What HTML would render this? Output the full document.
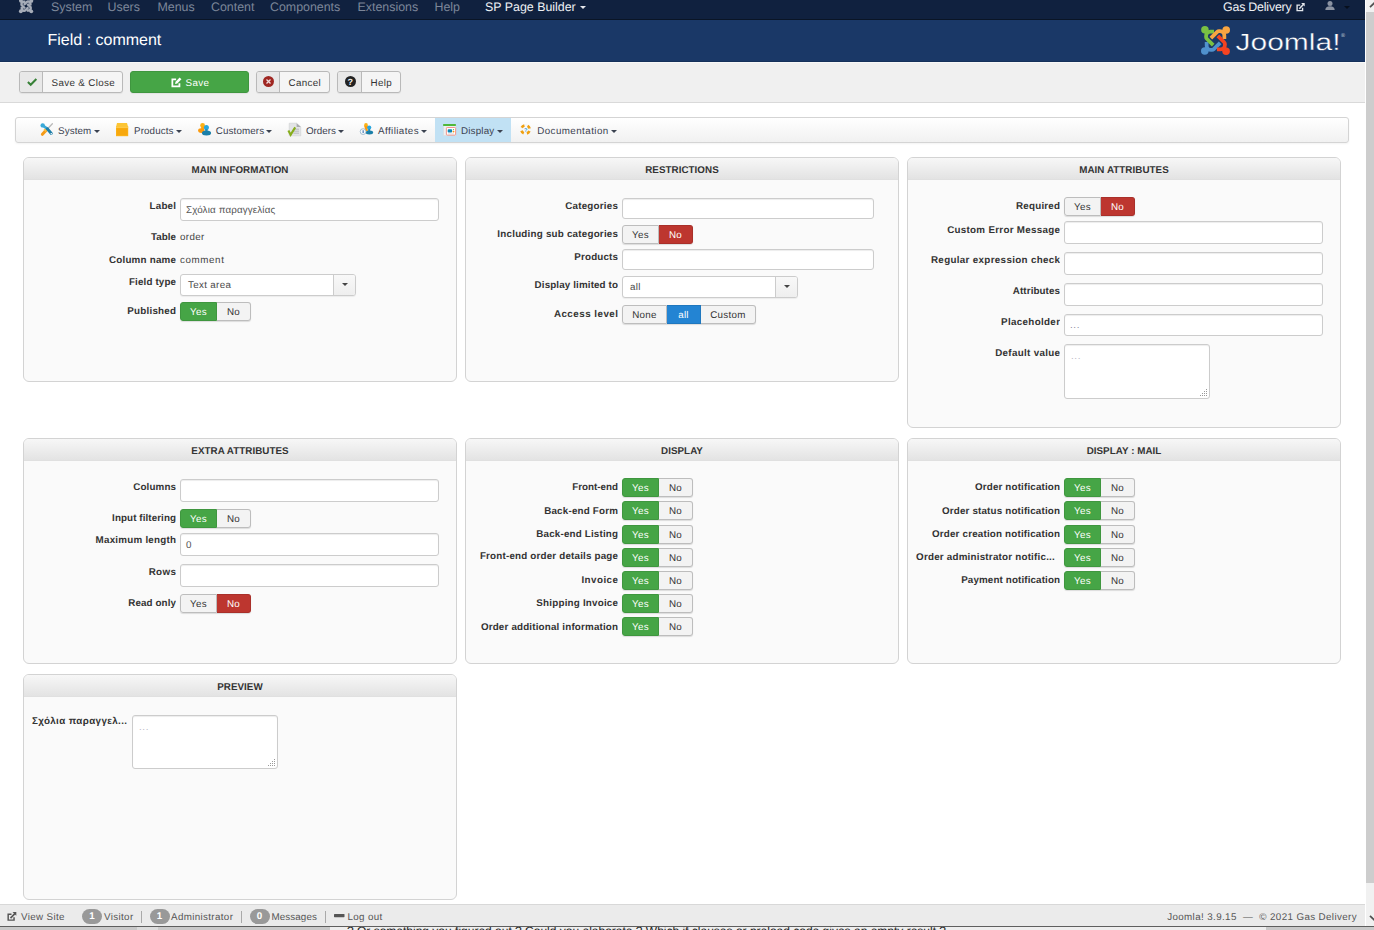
<!DOCTYPE html>
<html lang="en">
<head>
<meta charset="utf-8">
<title>Field : comment</title>
<style>
*{box-sizing:border-box;margin:0;padding:0}
html,body{width:1374px;height:930px;overflow:hidden;background:#fff}
body{position:relative;font-family:"Liberation Sans",Arial,sans-serif;font-size:9.8px;color:#333;line-height:1;text-rendering:geometricPrecision}
svg{position:absolute;overflow:visible}
/* ---------- top navbar ---------- */
#nav{position:absolute;left:0;top:0;width:1365px;height:20px;background:#10213f;border-bottom:1px solid #0a1526}
#nav span{position:absolute;top:0;font-size:12.4px;line-height:14px;color:#7c8699;white-space:nowrap}
#nav span.w{color:#eef0f4}
.car{position:absolute;width:0;height:0;border-left:3px solid transparent;border-right:3px solid transparent;border-top:3px solid #444}
/* ---------- header ---------- */
#hdr{position:absolute;left:0;top:20px;width:1365px;height:42px;background:#1a3867;border-bottom:1px solid #15305a}
#hdr h1{position:absolute;left:47.5px;top:11px;font-size:16px;line-height:20px;font-weight:normal;color:#fff;white-space:nowrap}
/* ---------- toolbar ---------- */
#tb{position:absolute;left:0;top:62px;width:1365px;height:41px;background:#f0f0f0;border-top:1px solid #f8f8f8;border-bottom:1px solid #d9d9d9}
.btn{position:absolute;top:8px;height:22px;border:1px solid #b9b9b9;border-radius:3px;background:#f5f5f5;font-size:9.8px;letter-spacing:.35px;line-height:20px;color:#333;white-space:nowrap;box-shadow:0 1px 1px rgba(0,0,0,.06)}
.btn i{position:absolute;left:0;top:0;width:23px;height:20px;border-right:1px solid #b9b9b9;background:#e8e8e8;border-radius:2px 0 0 2px}
.btn b{position:absolute;font-weight:normal;top:2px}
/* ---------- hikashop menu ---------- */
#menu{position:absolute;left:15px;top:117px;width:1334px;height:26px;border:1px solid #d4d4d4;border-radius:3px;background:linear-gradient(#fff,#f1f1f1);box-shadow:0 1px 2px rgba(0,0,0,.05)}
#menu span{position:absolute;top:0;height:24px;font-size:9.8px;line-height:27px;color:#3b4250;white-space:nowrap}
#menu .car{top:12px;border-top-color:#3b4250}
/* ---------- panels ---------- */
.panel{position:absolute;width:434px;border:1px solid #d3d3d3;border-radius:6px;background:#fafafa;overflow:hidden}
.panel h3{height:22px;border-bottom:1px solid #e0e0e0;background:linear-gradient(#f7f7f7,#e3e3e3);text-align:center;font-size:9.8px;letter-spacing:.05px;line-height:26px;font-weight:bold;color:#333}
/* ---------- form bits ---------- */
.l{position:absolute;width:148px;text-align:right;font-weight:bold;font-size:9.8px;letter-spacing:.24px;line-height:13px;color:#333;white-space:nowrap;overflow:hidden;text-overflow:ellipsis}
.v{position:absolute;font-size:9.8px;letter-spacing:.35px;line-height:13px;color:#444;white-space:nowrap}
.i{position:absolute;height:23px;border:1px solid #ccc;border-radius:3px;background:#fff;box-shadow:inset 0 1px 1px rgba(0,0,0,.075);font-size:9.8px;letter-spacing:.14px;line-height:23px;color:#555;padding-left:5px;white-space:nowrap;overflow:hidden}
.sel{position:absolute;height:22px;border:1px solid #ccc;border-radius:3px;background:#fff;box-shadow:0 1px 1px rgba(0,0,0,.06);font-size:9.8px;letter-spacing:.33px;line-height:21px;color:#4a4a4a;padding-left:7px;white-space:nowrap}
.sel i{position:absolute;right:0;top:0;width:22px;height:20px;border-left:1px solid #ccc;background:linear-gradient(#f8f8f8,#eee);border-radius:0 2px 2px 0}
.sel i:after{content:"";position:absolute;left:8px;top:8px;border-left:3px solid transparent;border-right:3px solid transparent;border-top:3px solid #444}
.sw{position:absolute;height:19px;display:flex;font-size:9.8px;letter-spacing:.3px;line-height:19px;color:#333;border-radius:3px;box-shadow:0 1px 1px rgba(0,0,0,.12)}
.sw span{display:block;height:19px;text-align:center;border:1px solid #bdbdbd;border-left-width:0;background:#f3f3f3;white-space:nowrap}
.sw span:first-child{border-left-width:1px;border-radius:3px 0 0 3px}
.sw span:last-child{border-radius:0 3px 3px 0}
.sw span.g{background:#46a546;border-color:#3f963f;color:#fff}
.sw span.r{background:#bd362f;border-color:#a9302a;color:#fff}
.sw span.b{background:#2384d3;border-color:#1f77be;color:#fff}
.y{width:37px}.n{width:34px}
.ta{position:absolute;border:1px solid #ccc;border-radius:3px;background:#fff;box-shadow:inset 0 1px 1px rgba(0,0,0,.075);font-size:9.8px;letter-spacing:.6px;color:#b9b9c6;padding:7px 6px}
.ta:after{content:"";position:absolute;right:2px;bottom:2px;width:7px;height:7px;background:
 linear-gradient(#999,#999) 6px 0/1px 1px no-repeat,
 linear-gradient(#999,#999) 4px 2px/1px 1px no-repeat,linear-gradient(#999,#999) 6px 2px/1px 1px no-repeat,
 linear-gradient(#999,#999) 2px 4px/1px 1px no-repeat,linear-gradient(#999,#999) 4px 4px/1px 1px no-repeat,linear-gradient(#999,#999) 6px 4px/1px 1px no-repeat,
 linear-gradient(#999,#999) 0 6px/1px 1px no-repeat,linear-gradient(#999,#999) 2px 6px/1px 1px no-repeat,linear-gradient(#999,#999) 4px 6px/1px 1px no-repeat,linear-gradient(#999,#999) 6px 6px/1px 1px no-repeat}
/* ---------- status bar ---------- */
#sb{position:absolute;left:0;top:904px;width:1365px;height:22px;background:#ebebeb;border-top:1px solid #d8d8d8;font-size:9.8px;letter-spacing:.35px;color:#555}
#sb span{position:absolute;top:5.6px;line-height:13px;white-space:nowrap}
#sb em{position:absolute;top:4px;height:15px;width:20px;border-radius:8px;background:#999;color:#fff;font-style:normal;font-weight:bold;font-size:9.8px;letter-spacing:0;line-height:15px;text-align:center}
#sb u{position:absolute;top:6px;width:1px;height:12px;background:#a9a9a9}
#under{position:absolute;left:0;top:926px;width:1374px;height:4px;background:#c9c9c9;border-top:1px solid #5f5f5f;overflow:hidden}
#under div{position:absolute;left:330px;top:0;width:936px;height:4px;background:#eee;font-size:12px;line-height:12px;color:#222;white-space:nowrap;padding-left:17px}
#under div span{position:relative;top:-2px}
/* ---------- scrollbar ---------- */
#scr{position:absolute;left:1366px;top:0;width:8px;height:926px;background:#f1f1f1}
#scr div{position:absolute;left:0;top:12px;width:8px;height:871px;background:#cdcdcd}
</style>
</head>
<body>


<div id="nav">
  <svg style="left:18.8px;top:-1px" width="14.2" height="14.2" viewBox="0 0 100 100"><g transform="rotate(270 50 50)"><circle cx="13.5" cy="13" r="13.5" fill="#a6acb8"/><path d="M45 19.5 L33 19.5 Q17.5 19.5 17.5 35 L17.5 38 Q17.5 41.5 20 44 L42 66" fill="none" stroke="#a6acb8" stroke-width="17"/></g><g><circle cx="13.5" cy="13" r="13.5" fill="#a6acb8"/><path d="M45 19.5 L33 19.5 Q17.5 19.5 17.5 35 L17.5 38 Q17.5 41.5 20 44 L42 66" fill="none" stroke="#a6acb8" stroke-width="17"/></g><g transform="rotate(90 50 50)"><circle cx="13.5" cy="13" r="13.5" fill="#a6acb8"/><path d="M45 19.5 L33 19.5 Q17.5 19.5 17.5 35 L17.5 38 Q17.5 41.5 20 44 L42 66" fill="none" stroke="#a6acb8" stroke-width="17"/></g><g transform="rotate(180 50 50)"><circle cx="13.5" cy="13" r="13.5" fill="#a6acb8"/><path d="M45 19.5 L33 19.5 Q17.5 19.5 17.5 35 L17.5 38 Q17.5 41.5 20 44 L42 66" fill="none" stroke="#a6acb8" stroke-width="17"/></g></svg>
  <span style="left:51px">System</span>
  <span style="left:107.5px">Users</span>
  <span style="left:157.5px">Menus</span>
  <span style="left:211px">Content</span>
  <span style="left:270px">Components</span>
  <span style="left:357.5px">Extensions</span>
  <span style="left:434.5px">Help</span>
  <span class="w" style="left:485px">SP Page Builder</span>
  <div class="car" style="left:580px;top:6px;border-top-color:#e6e8ec"></div>
  <span class="w" style="left:1223px;letter-spacing:-0.2px">Gas Delivery</span>
  <svg style="left:1295.8px;top:3.2px" width="8.7" height="8.7" viewBox="0 0 9.5 9.5"><path d="M7.2 5.3 V8.3 H1.2 V2.3 H4.6" fill="none" stroke="#e4e7ec" stroke-width="1.5"/><path d="M3.6 6.2 L8.3 1.4" fill="none" stroke="#e4e7ec" stroke-width="1.7"/><path d="M5.6 0 H9.5 V3.9 Z" fill="#e4e7ec"/></svg>
  <svg style="left:1324.5px;top:1px" width="10" height="9" viewBox="0 0 10 9"><circle cx="5" cy="2.6" r="2.5" fill="#8b93a2"/><path d="M0.3 9 Q0.3 5.2 5 5.2 Q9.7 5.2 9.7 9 Z" fill="#8b93a2"/></svg>
  <div class="car" style="left:1343.5px;top:5.5px;border-top-color:#070f1c"></div>
</div>


<div id="hdr"><h1>Field : comment</h1>
  <svg style="left:1201px;top:6px" width="29" height="29" viewBox="0 0 100 100"><g transform="rotate(270 50 50)"><circle cx="13.5" cy="13" r="13" fill="#5091cd"/><path d="M45 19.5 L33 19.5 Q17.5 19.5 17.5 35 L17.5 38 Q17.5 41.5 20 44 L42 66" fill="none" stroke="#5091cd" stroke-width="13"/></g><g><circle cx="13.5" cy="13" r="13" fill="#7ac143"/><path d="M45 19.5 L33 19.5 Q17.5 19.5 17.5 35 L17.5 38 Q17.5 41.5 20 44 L42 66" fill="none" stroke="#7ac143" stroke-width="13"/></g><g transform="rotate(90 50 50)"><circle cx="13.5" cy="13" r="13" fill="#f9a541"/><path d="M45 19.5 L33 19.5 Q17.5 19.5 17.5 35 L17.5 38 Q17.5 41.5 20 44 L42 66" fill="none" stroke="#f9a541" stroke-width="13"/></g><g transform="rotate(180 50 50)"><circle cx="13.5" cy="13" r="13" fill="#f44321"/><path d="M45 19.5 L33 19.5 Q17.5 19.5 17.5 35 L17.5 38 Q17.5 41.5 20 44 L42 66" fill="none" stroke="#f44321" stroke-width="13"/></g></svg>
  <svg style="left:1233px;top:6px" width="120" height="30" viewBox="0 0 120 30"><text x="2.5" y="23.6" font-family="Liberation Sans, Arial, sans-serif" font-size="23.4" fill="#fff" stroke="#1a3867" stroke-width="0.35" textLength="105" lengthAdjust="spacingAndGlyphs">Joomla!</text><text x="108" y="10.5" font-family="Liberation Sans, Arial, sans-serif" font-size="5.5" fill="#c9d0dc">®</text></svg>
</div>


<div id="tb">
  <div class="btn" style="left:19px;width:104px"><i></i>
    <svg style="left:6.8px;top:5.6px" width="10.6" height="8" viewBox="0 0 12 9"><path d="M1 4.6 L4.2 7.6 L10.6 1.2" fill="none" stroke="#378137" stroke-width="2.3"/></svg>
    <b style="left:31.5px">Save &amp; Close</b></div>
  <div class="btn" style="left:130px;width:119px;background:#46a546;border-color:#3f963f;color:#fff">
    <svg style="left:40px;top:4.5px;color:#fff" width="11" height="10.5" viewBox="0 0 9.5 9.5"><path d="M7.4 5.6 V8.5 H1 V2.1 H4.4" fill="none" stroke="#fff" stroke-width="1.6"/><path d="M3.4 6.3 L3.9 4.2 L7.6 0.5 L9.2 2.1 L5.5 5.8 Z" fill="#fff"/></svg>
    <b style="left:54.5px">Save</b></div>
  <div class="btn" style="left:256px;width:74px"><i></i>
    <svg style="left:6.2px;top:4.2px" width="11" height="11" viewBox="0 0 11 11"><circle cx="5.5" cy="5.5" r="5.5" fill="#9f2722"/><path d="M3.5 3.5 L7.5 7.5 M7.5 3.5 L3.5 7.5" stroke="#f3dede" stroke-width="1.3"/></svg>
    <b style="left:31.5px">Cancel</b></div>
  <div class="btn" style="left:337px;width:64px"><i style="width:24px"></i>
    <svg style="left:7px;top:4.2px" width="11" height="11" viewBox="0 0 11 11"><circle cx="5.5" cy="5.5" r="5.5" fill="#222"/><text x="5.5" y="9" text-anchor="middle" font-family="Liberation Sans, Arial, sans-serif" font-weight="bold" font-size="9" fill="#f0f0f0">?</text></svg>
    <b style="left:32.5px">Help</b></div>
</div>

<div id="menu">
  <span style="left:419px;width:76px;background:#c1e1f4"></span>
  <svg style="left:23.9px;top:4.799999999999997px" width="13.3" height="13.3" viewBox="0 0 13.3 13.3">
 <path d="M12.4 0.8 L7.6 5.8" stroke="#b9b9b9" stroke-width="1.3" stroke-linecap="round"/>
 <path d="M6.4 6.9 L2.4 11.3" stroke="#f59a17" stroke-width="3" stroke-linecap="round"/>
 <path d="M5.9 6.6 L4.6 8.1" stroke="#fbbf3c" stroke-width="3"/>
 <path d="M2.4 2.2 L7.5 5.9" stroke="#3aa9d8" stroke-width="2.6" stroke-linecap="round"/>
 <circle cx="2.7" cy="2.4" r="2.2" fill="#3aa9d8"/>
 <path d="M7.3 5.8 L11.3 10.5" stroke="#1e7ea8" stroke-width="2.9" stroke-linecap="round"/>
 <circle cx="11.3" cy="10.7" r="0.8" fill="#fff"/>
</svg><span style="left:42px;letter-spacing:0.119px">System</span><div class="car" style="left:78px"></div>
  <svg style="left:99.9px;top:4.900000000000006px" width="13.3" height="13.3" viewBox="0 0 13.3 13.3">
 <path d="M1 0 H11 L12.2 4 H0 Z" fill="#fcc534"/>
 <rect x="0" y="3.6" width="12.2" height="9.6" fill="#fbb116"/>
 <rect x="0" y="3.6" width="12.2" height="1.2" fill="#fdd055"/>
 <rect x="0.9" y="5.4" width="10.4" height="6.6" fill="#f7a80d"/>
</svg><span style="left:118px;letter-spacing:0.114px">Products</span><div class="car" style="left:159.6px"></div>
  <svg style="left:182px;top:5px" width="13.3" height="13.3" viewBox="0 0 13.3 13.3">
 <circle cx="4.6" cy="2.5" r="2.4" fill="#fbb116"/>
 <path d="M3.2 3.6 h2.8 v2.4 h-2.8z" fill="#fba512"/>
 <ellipse cx="3.3" cy="7.6" rx="3.2" ry="2.4" fill="#fb9a0e"/>
 <circle cx="8.4" cy="4.5" r="2.5" fill="#27a6de"/>
 <path d="M7.2 6 h2.4 v2.4 h-2.4z" fill="#1f8fc0"/>
 <ellipse cx="8.5" cy="10" rx="4.6" ry="2.5" fill="#1a7fa8"/>
</svg><span style="left:199.8px;letter-spacing:0.112px">Customers</span><div class="car" style="left:250px"></div>
  <svg style="left:272.2px;top:5px" width="13.3" height="13.3" viewBox="0 0 13.3 13.3">
 <path d="M1.2 0.2 H8.6 L12.8 4 V12.8 H1.2 Z" fill="#e3e4e6" stroke="#c9cacc" stroke-width="0.5"/>
 <path d="M8.6 0.2 V4 H12.8 Z" fill="#a9abae"/>
 <path d="M6.6 6.2 H11 M6 8.2 H11 M5.4 10.2 H11" stroke="#b3b5b8" stroke-width="0.9"/>
 <path d="M0.4 7.6 L2.6 11.8 L7.2 4.4" fill="none" stroke="#86ad1c" stroke-width="2.1" stroke-linejoin="miter"/>
</svg><span style="left:290px;letter-spacing:-0.011px">Orders</span><div class="car" style="left:322px"></div>
  <svg style="left:343.9px;top:4.900000000000006px" width="13.3" height="13.3" viewBox="0 0 13.3 13.3">
 <ellipse cx="6" cy="2.4" rx="1.9" ry="2.3" fill="#fbb116"/>
 <path d="M4.6 3 L7.6 3 L7.8 8 L5 8 Z" fill="#fb9a0e"/>
 <circle cx="9.2" cy="4.6" r="2.1" fill="#27a6de"/>
 <path d="M8.2 6 h2 v2 h-2z" fill="#1f8fc0"/>
 <ellipse cx="9.4" cy="9.6" rx="3.8" ry="2" fill="#1a7fa8"/>
 <circle cx="3.1" cy="8.6" r="2.9" fill="#f7fafc" stroke="#8fb0c6" stroke-width="0.8"/>
 <path d="M2.6 7.2 h1.1 v2.9 h-1.1z" fill="#3a6fb0"/>
</svg><span style="left:362px;letter-spacing:0.413px">Affiliates</span><div class="car" style="left:405px"></div>
  <svg style="left:427px;top:5.799999999999997px" width="13.2" height="12" viewBox="0 0 13.2 12">
 <rect x="0.2" y="1.4" width="12.8" height="10.4" fill="#eef0f2" stroke="#c6cdd3" stroke-width="0.4"/>
 <rect x="0" y="0" width="13" height="2" rx="0.8" fill="#4fb83a"/>
 <rect x="3.4" y="3.5" width="9.2" height="7.6" rx="0.8" fill="#fff" stroke="#f28b82" stroke-width="0.9"/>
 <rect x="4.7" y="5.2" width="4.4" height="3.2" rx="0.9" fill="#0f86b5"/>
 <circle cx="10.5" cy="5.6" r="0.7" fill="#5cc04a"/>
 <circle cx="10.5" cy="7.6" r="0.95" fill="#f59a17"/>
 <path d="M5 9.8 H11" stroke="#c8ccd0" stroke-width="0.6"/>
</svg><span style="left:445px;letter-spacing:0.179px">Display</span><div class="car" style="left:481px"></div>
  <svg style="left:504px;top:5.900000000000006px" width="11" height="11" viewBox="0 0 11 11">
 <circle cx="5.5" cy="5.5" r="4.2" fill="none" stroke="#f4f6f8" stroke-width="2.6"/>
 <circle cx="5.5" cy="5.5" r="4.2" fill="none" stroke="#f0a010" stroke-width="2.6" stroke-dasharray="3.3 3.3" stroke-dashoffset="-1.65"/>
 <text x="5.6" y="7.6" text-anchor="middle" font-family="Liberation Sans, Arial, sans-serif" font-weight="bold" font-size="5.6" fill="#3a9bd0">?</text>
</svg><span style="left:521.2px;letter-spacing:0.428px">Documentation</span><div class="car" style="left:595.2px"></div>
  
</div>


<div class="panel" style="left:23px;top:157px;height:225px"><h3>MAIN INFORMATION</h3></div>
<div class="panel" style="left:465px;top:157px;height:225px"><h3>RESTRICTIONS</h3></div>
<div class="panel" style="left:907px;top:157px;height:271px"><h3>MAIN ATTRIBUTES</h3></div>
<div class="panel" style="left:23px;top:438px;height:226px"><h3>EXTRA ATTRIBUTES</h3></div>
<div class="panel" style="left:465px;top:438px;height:226px"><h3>DISPLAY</h3></div>
<div class="panel" style="left:907px;top:438px;height:226px"><h3>DISPLAY : MAIL</h3></div>
<div class="panel" style="left:23px;top:674px;height:226px"><h3>PREVIEW</h3></div>


<!-- MAIN INFORMATION -->
<div class="l" style="left:28px;top:199.5px;letter-spacing:0.218px;width:148.218px">Label</div>
<div class="i" style="left:180px;top:198px;width:259px">Σχόλια παραγγελίας</div>
<div class="l" style="left:28px;top:230.5px;letter-spacing:0.063px;width:148.063px">Table</div>
<div class="v" style="left:180px;top:230.5px">order</div>
<div class="l" style="left:28px;top:253.5px;letter-spacing:0.226px;width:148.226px">Column name</div>
<div class="v" style="left:180px;top:253.5px;letter-spacing:.6px">comment</div>
<div class="l" style="left:28px;top:275.5px;letter-spacing:0.144px;width:148.144px">Field type</div>
<div class="sel" style="left:180px;top:274px;width:176px">Text area<i></i></div>
<div class="l" style="left:28px;top:304.5px;letter-spacing:0.24px;width:148.24px">Published</div>
<div class="sw" style="left:180px;top:302px"><span class="y g">Yes</span><span class="n">No</span></div>

<!-- RESTRICTIONS -->
<div class="l" style="left:470px;top:199.5px;letter-spacing:0.243px;width:148.243px">Categories</div>
<div class="i" style="left:622px;top:198px;height:21px;width:252px"></div>
<div class="l" style="left:470px;top:227.5px;letter-spacing:0.227px;width:148.227px">Including sub categories</div>
<div class="sw" style="left:622px;top:225px"><span class="y">Yes</span><span class="n r">No</span></div>
<div class="l" style="left:470px;top:250.5px;letter-spacing:0.177px;width:148.177px">Products</div>
<div class="i" style="left:622px;top:249px;height:21px;width:252px"></div>
<div class="l" style="left:470px;top:278.5px;letter-spacing:0.136px;width:148.136px">Display limited to</div>
<div class="sel" style="left:622px;top:276px;width:176px;line-height:22px">all<i></i></div>
<div class="l" style="left:470px;top:307.5px;letter-spacing:0.478px;width:148.478px">Access level</div>
<div class="sw" style="left:622px;top:305px"><span style="width:45px">None</span><span class="b" style="width:34px">all</span><span style="width:55px">Custom</span></div>

<!-- MAIN ATTRIBUTES -->
<div class="l" style="left:912px;top:199.5px;letter-spacing:0.214px;width:148.214px">Required</div>
<div class="sw" style="left:1064px;top:197px"><span class="y">Yes</span><span class="n r">No</span></div>
<div class="l" style="left:912px;top:223.5px;letter-spacing:0.295px;width:148.295px">Custom Error Message</div>
<div class="i" style="left:1064px;top:221px;width:259px"></div>
<div class="l" style="left:912px;top:253.5px;letter-spacing:0.33px;width:148.33px">Regular expression check</div>
<div class="i" style="left:1064px;top:252px;width:259px"></div>
<div class="l" style="left:912px;top:284.5px;letter-spacing:0.101px;width:148.101px">Attributes</div>
<div class="i" style="left:1064px;top:283px;width:259px"></div>
<div class="l" style="left:912px;top:315.5px;letter-spacing:0.339px;width:148.339px">Placeholder</div>
<div class="i" style="left:1064px;top:314px;height:22px;width:259px"><span style="color:#8c8c9c;position:relative;top:-1.5px;letter-spacing:.6px">...</span></div>
<div class="l" style="left:912px;top:346.5px;letter-spacing:0.322px;width:148.322px">Default value</div>
<div class="ta" style="left:1064px;top:344px;width:146px;height:55px">...</div>

<!-- EXTRA ATTRIBUTES -->
<div class="l" style="left:28px;top:480.5px;letter-spacing:0.137px;width:148.137px">Columns</div>
<div class="i" style="left:180px;top:479px;width:259px"></div>
<div class="l" style="left:28px;top:511.5px;letter-spacing:0.092px;width:148.092px">Input filtering</div>
<div class="sw" style="left:180px;top:509px"><span class="y g">Yes</span><span class="n">No</span></div>
<div class="l" style="left:28px;top:533.5px;letter-spacing:0.241px;width:148.241px">Maximum length</div>
<div class="i" style="left:180px;top:533px;width:259px">0</div>
<div class="l" style="left:28px;top:565.5px;letter-spacing:0.412px;width:148.412px">Rows</div>
<div class="i" style="left:180px;top:564px;width:259px"></div>
<div class="l" style="left:28px;top:596.5px;letter-spacing:0.117px;width:148.117px">Read only</div>
<div class="sw" style="left:180px;top:594px"><span class="y">Yes</span><span class="n r">No</span></div>

<!-- DISPLAY -->
<div class="l" style="left:470px;top:480.5px;letter-spacing:0.018px;width:148.018px">Front-end</div>
<div class="sw" style="left:622px;top:478px"><span class="y g">Yes</span><span class="n">No</span></div>
<div class="l" style="left:470px;top:504.5px;letter-spacing:0.211px;width:148.211px">Back-end Form</div>
<div class="sw" style="left:622px;top:501px"><span class="y g">Yes</span><span class="n">No</span></div>
<div class="l" style="left:470px;top:527.5px;letter-spacing:0.183px;width:148.183px">Back-end Listing</div>
<div class="sw" style="left:622px;top:525px"><span class="y g">Yes</span><span class="n">No</span></div>
<div class="l" style="left:470px;top:549.5px;letter-spacing:0.194px;width:148.194px">Front-end order details page</div>
<div class="sw" style="left:622px;top:548px"><span class="y g">Yes</span><span class="n">No</span></div>
<div class="l" style="left:470px;top:573.5px;letter-spacing:0.474px;width:148.474px">Invoice</div>
<div class="sw" style="left:622px;top:571px"><span class="y g">Yes</span><span class="n">No</span></div>
<div class="l" style="left:470px;top:596.5px;letter-spacing:0.217px;width:148.217px">Shipping Invoice</div>
<div class="sw" style="left:622px;top:594px"><span class="y g">Yes</span><span class="n">No</span></div>
<div class="l" style="left:470px;top:620.5px;letter-spacing:0.178px;width:148.178px">Order additional information</div>
<div class="sw" style="left:622px;top:617px"><span class="y g">Yes</span><span class="n">No</span></div>

<!-- DISPLAY : MAIL -->
<div class="l" style="left:912px;top:480.5px;letter-spacing:0.165px;width:148.165px">Order notification</div>
<div class="sw" style="left:1064px;top:478px"><span class="y g">Yes</span><span class="n">No</span></div>
<div class="l" style="left:912px;top:504.5px;letter-spacing:0.179px;width:148.179px">Order status notification</div>
<div class="sw" style="left:1064px;top:501px"><span class="y g">Yes</span><span class="n">No</span></div>
<div class="l" style="left:912px;top:527.5px;letter-spacing:0.194px;width:148.194px">Order creation notification</div>
<div class="sw" style="left:1064px;top:525px"><span class="y g">Yes</span><span class="n">No</span></div>
<div class="l" style="left:907px;top:550.5px;width:148px;overflow:visible;letter-spacing:0.222px">Order administrator notific...</div>
<div class="sw" style="left:1064px;top:548px"><span class="y g">Yes</span><span class="n">No</span></div>
<div class="l" style="left:912px;top:573.5px;letter-spacing:0.13px;width:148.13px">Payment notification</div>
<div class="sw" style="left:1064px;top:571px"><span class="y g">Yes</span><span class="n">No</span></div>

<!-- PREVIEW -->
<div class="l" style="left:32px;top:715px;width:100px;text-align:left;overflow:visible;letter-spacing:0.378px">Σχόλια παραγγελ...</div>
<div class="ta" style="left:132px;top:715px;width:146px;height:54px">...</div>


<div id="sb">
  <svg style="left:7.4px;top:6.5px" width="9.3" height="9.3" viewBox="0 0 9.5 9.5"><path d="M7.2 5.3 V8.3 H1.2 V2.3 H4.6" fill="none" stroke="#555" stroke-width="1.5"/><path d="M3.6 6.2 L8.3 1.4" fill="none" stroke="#555" stroke-width="1.7"/><path d="M5.6 0 H9.5 V3.9 Z" fill="#555"/></svg>
  <span style="left:21px">View Site</span>
  <em style="left:82px">1</em><span style="left:104px">Visitor</span><u style="left:141px"></u>
  <em style="left:149.5px">1</em><span style="left:171px">Administrator</span><u style="left:241px"></u>
  <em style="left:249.5px">0</em><span style="left:271.5px;letter-spacing:.1px">Messages</span><u style="left:325px"></u>
  <svg style="left:333.8px;top:9px" width="10.5" height="3.5" viewBox="0 0 10.5 3.5"><rect width="10.5" height="3.2" rx="0.6" fill="#555"/></svg>
  <span style="left:347.5px">Log out</span>
  <span style="right:8px;letter-spacing:0.378px">Joomla! 3.9.15 &nbsp;—&nbsp; © 2021 Gas Delivery</span>
</div>
<div id="under"><i style="position:absolute;left:137px;top:0;width:21px;height:4px;background:#dcdcdc"></i><div><span>? Or something you figured out ? Could you elaborate ? Which if clauses or preload code gives an empty result ?</span></div></div>
<div id="scr"><div></div>
  <svg style="left:1px;top:1px" width="8" height="8" viewBox="0 0 8 8"><path d="M3 6.2 L8 1.2" fill="none" stroke="#505050" stroke-width="1.7"/></svg>
  <svg style="left:1px;top:914px" width="8" height="8" viewBox="0 0 8 8"><path d="M3 1.8 L8 6.8" fill="none" stroke="#505050" stroke-width="1.7"/></svg>
</div>

</body>
</html>
